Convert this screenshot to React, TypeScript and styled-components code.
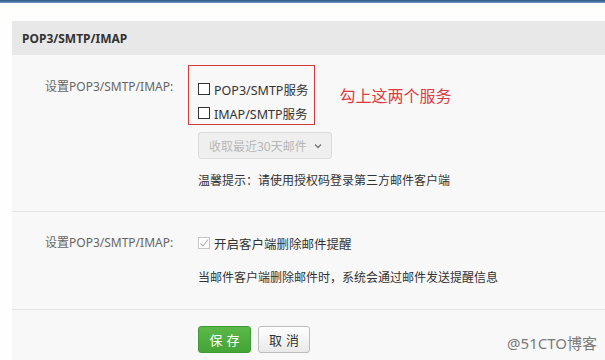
import React from "react";
import styled, { createGlobalStyle } from "styled-components";

const GlobalStyle = createGlobalStyle`
  body {
    margin: 0;
    background: #fefefc;
    font-family: "Noto Sans", "Noto Sans CJK SC", sans-serif;
    color: #333;
  }
`;

const Page = styled.div`
  position: relative;
  width: 605px;
  height: 360px;
  overflow: hidden;
`;

const TopBar = styled.div`
  height: 3px;
  background: linear-gradient(#2b5584, #6f94bb);
`;

const Panel = styled.div`
  margin: 18px 0 0 12px;
  background: #f8f8f8;
`;

const PanelHeader = styled.div`
  height: 34px;
  display: flex;
  align-items: center;
  padding-left: 10px;
  background: #e8e8e8;
  font-size: 12px;
  font-weight: 700;
  color: #333;
`;

const Section = styled.div<{ $top: number; $bottom: number; $last?: boolean }>`
  display: grid;
  grid-template-columns: 153px 1fr;
  padding: ${(p) => p.$top}px 0 ${(p) => p.$bottom}px 33px;
  border-bottom: ${(p) => (p.$last ? "none" : "1px solid #e6e6e6")};
`;

const Label = styled.div<{ $offset: number }>`
  margin-top: ${(p) => p.$offset}px;
  font-size: 12px;
  line-height: 18px;
  color: #666;
`;

const Controls = styled.div`
  display: flex;
  flex-direction: column;
  align-items: flex-start;
`;

const Annotated = styled.div`
  display: flex;
  align-items: center;
`;

const RedBox = styled.div`
  margin-left: -10px;
  padding: 11px 6px 0 9px;
  height: 47px;
  border: 1px solid #d03a3a;
`;

const Note = styled.div`
  margin-left: 24px;
  font-size: 16px;
  color: #dc3b3f;
`;

const CheckRow = styled.label`
  display: flex;
  align-items: center;
  height: 24px;
  font-size: 12.5px;
  color: #333;
  white-space: nowrap;
`;

const Box = styled.span<{ $disabled?: boolean }>`
  flex: 0 0 auto;
  display: inline-flex;
  align-items: center;
  justify-content: center;
  box-sizing: border-box;
  width: 12px;
  height: 12px;
  margin-right: 4px;
  border: 1px solid ${(p) => (p.$disabled ? "#c4c4c4" : "#333")};
  background: #fff;
`;

const Select = styled.div`
  margin-top: 7px;
  box-sizing: border-box;
  width: 134px;
  height: 27px;
  display: flex;
  align-items: center;
  padding: 0 0 0 10px;
  gap: 7px;
  border: 1px solid #dcdcdc;
  border-radius: 3px;
  background: #efefef;
  font-size: 12px;
  color: #b8b8b8;
  white-space: nowrap;
`;

const Hint = styled.div<{ $gap: number }>`
  margin-top: ${(p) => p.$gap}px;
  font-size: 12px;
  line-height: 18px;
  color: #333;
`;

const Buttons = styled.div`
  display: flex;
  gap: 7px;
`;

const Button = styled.button<{ $primary?: boolean }>`
  box-sizing: border-box;
  width: ${(p) => (p.$primary ? 53 : 52)}px;
  height: 27px;
  padding: 0 0 0 4px;
  border-radius: 3px;
  border: 1px solid ${(p) => (p.$primary ? "#3f9a36" : "#bcbcbc")};
  background: ${(p) =>
    p.$primary
      ? "linear-gradient(#5bb848, #45a338)"
      : "linear-gradient(#fefefe, #e9e9e9)"};
  color: ${(p) => (p.$primary ? "#fff" : "#333")};
  font-family: inherit;
  font-size: 13px;
  letter-spacing: 4px;
`;

const Watermark = styled.div`
  position: absolute;
  right: 8px;
  bottom: 7px;
  font-size: 15px;
  color: #7a7a7a;
`;

const Chevron = () => (
  <svg width="8" height="6" viewBox="0 0 8 6">
    <path d="M1 1.5 L4 4.5 L7 1.5" fill="none" stroke="#777" strokeWidth="1.3" />
  </svg>
);

const Tick = () => (
  <svg width="10" height="10" viewBox="0 0 10 10">
    <path d="M1.5 5.5 L4 8 L9 1.5" fill="none" stroke="#b0b0b0" strokeWidth="1.1" />
  </svg>
);

export default function App() {
  return (
    <Page>
      <GlobalStyle />
      <TopBar />
      <Panel>
        <PanelHeader>POP3/SMTP/IMAP</PanelHeader>
        <Section $top={10} $bottom={21}>
          <Label $offset={13}>设置POP3/SMTP/IMAP:</Label>
          <Controls>
            <Annotated>
              <RedBox>
                <CheckRow>
                  <Box />
                  POP3/SMTP服务
                </CheckRow>
                <CheckRow>
                  <Box />
                  IMAP/SMTP服务
                </CheckRow>
              </RedBox>
              <Note>勾上这两个服务</Note>
            </Annotated>
            <Select>
              收取最近30天邮件
              <Chevron />
            </Select>
            <Hint $gap={13}>温馨提示：请使用授权码登录第三方邮件客户端</Hint>
          </Controls>
        </Section>
        <Section $top={19} $bottom={22}>
          <Label $offset={3}>设置POP3/SMTP/IMAP:</Label>
          <Controls>
            <CheckRow>
              <Box $disabled>
                <Tick />
              </Box>
              开启客户端删除邮件提醒
            </CheckRow>
            <Hint $gap={14}>当邮件客户端删除邮件时，系统会通过邮件发送提醒信息</Hint>
          </Controls>
        </Section>
        <Section $top={16} $bottom={20} $last>
          <span />
          <Buttons>
            <Button $primary>保存</Button>
            <Button>取消</Button>
          </Buttons>
        </Section>
      </Panel>
      <Watermark>@51CTO博客</Watermark>
    </Page>
  );
}
